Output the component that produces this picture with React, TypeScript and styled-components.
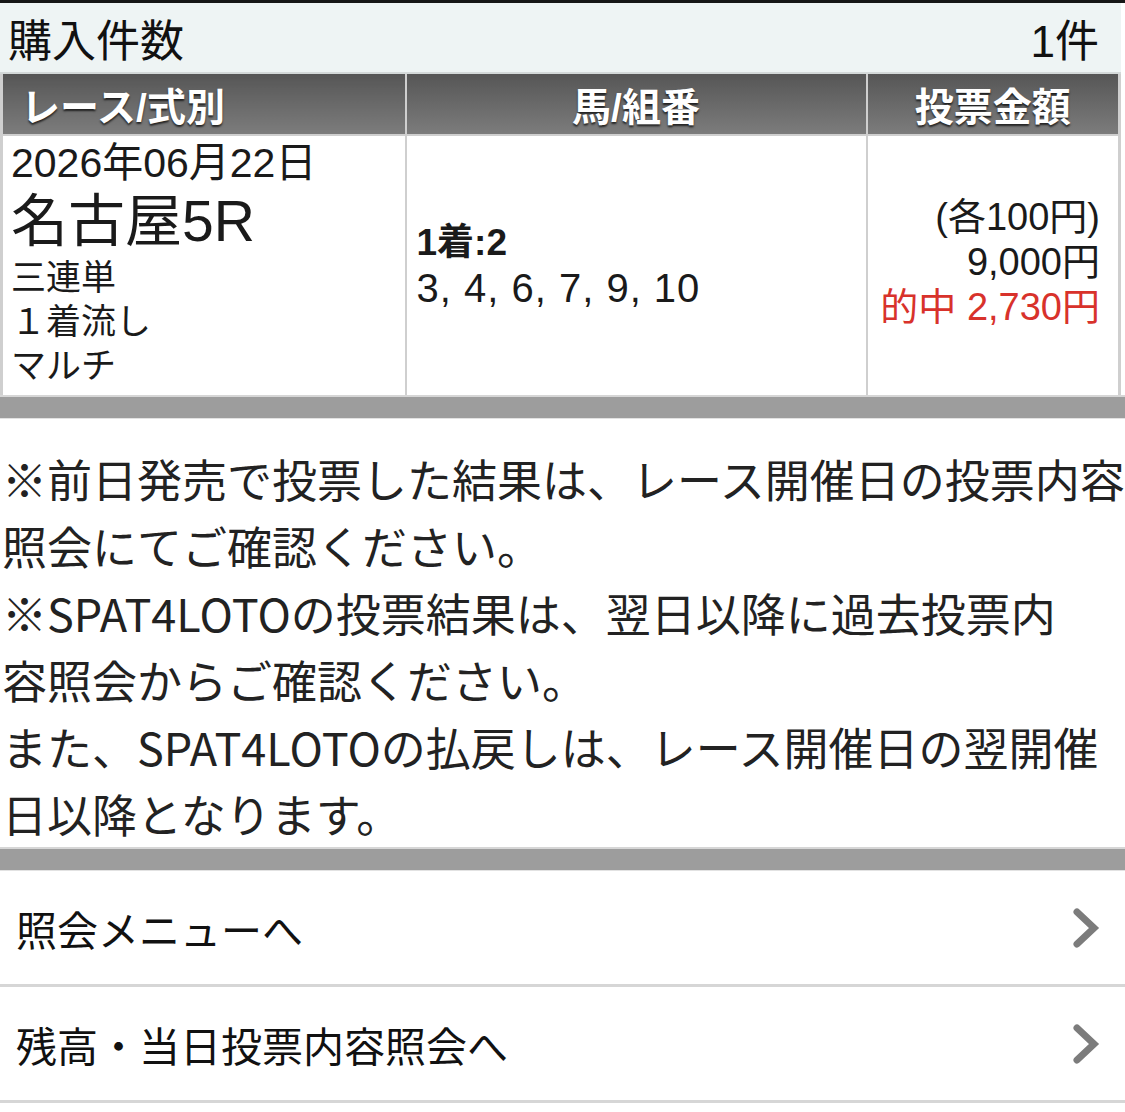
import styled, { createGlobalStyle } from "styled-components";

const GlobalStyle = createGlobalStyle`
  body {
    margin: 0;
    background: #ffffff;
    font-family: "Liberation Sans", "Noto Sans CJK JP", sans-serif;
    color: #1a1a1a;
  }
`;

const menuItems = ["照会メニューへ", "残高・当日投票内容照会へ"];

const notes = [
  "※前日発売で投票した結果は、レース開催日の投票内容",
  "照会にてご確認ください。",
  "※SPAT4LOTOの投票結果は、翌日以降に過去投票内",
  "容照会からご確認ください。",
  "また、SPAT4LOTOの払戻しは、レース開催日の翌開催",
  "日以降となります。",
];

const Chevron = () => (
  <svg width="30" height="42" viewBox="0 0 30 42">
    <polyline
      points="6,5 23,21 6,37"
      fill="none"
      stroke="#7c7c7c"
      strokeWidth="7"
      strokeLinecap="round"
      strokeLinejoin="miter"
    />
  </svg>
);

const App = () => {
  return (
    <Page>
      <GlobalStyle />
      <TopLine />
      <CountBar>
        <span>購入件数</span>
        <span>1件</span>
      </CountBar>
      <Table>
        <thead>
          <tr>
            <Th $align="left">レース/式別</Th>
            <Th $align="center">馬/組番</Th>
            <Th $align="center">投票金額</Th>
          </tr>
        </thead>
        <tbody>
          <tr>
            <RaceCell>
              <DateText>2026年06月22日</DateText>
              <RaceName>名古屋5R</RaceName>
              <BetType>三連単</BetType>
              <BetType>１着流し</BetType>
              <BetType>マルチ</BetType>
            </RaceCell>
            <HorseCell>
              <FirstPlace>1着:2</FirstPlace>
              <Numbers>3, 4, 6, 7, 9, 10</Numbers>
            </HorseCell>
            <AmountCell>
              <Amount>(各100円)</Amount>
              <Amount>9,000円</Amount>
              <Amount $hit>的中 2,730円</Amount>
            </AmountCell>
          </tr>
        </tbody>
      </Table>
      <Divider />
      <Notes>
        {notes.map((line, i) => (
          <NoteLine key={i}>{line}</NoteLine>
        ))}
      </Notes>
      <Divider />
      <Menu>
        {menuItems.map((label) => (
          <MenuItem key={label}>
            <span>{label}</span>
            <Chevron />
          </MenuItem>
        ))}
      </Menu>
    </Page>
  );
};

const Page = styled.div`
  width: 1125px;
  min-height: 1112px;
  background: #ffffff;
`;

const TopLine = styled.div`
  height: 3px;
  background: #161616;
`;

const CountBar = styled.div`
  display: flex;
  justify-content: space-between;
  align-items: center;
  width: 1121px;
  box-sizing: border-box;
  height: 71px;
  padding: 0 22px 0 8px;
  background: #eef4f4;
  border-bottom: 2px solid #d4d9d9;
  font-size: 44px;
  color: #111;
`;

const Table = styled.table`
  width: 1121px;
  border-collapse: collapse;
  table-layout: fixed;
  border-left: 3px solid #cfcfcf;
  border-right: 3px solid #cfcfcf;
  & td,
  & th {
    border-left: 2px solid #cfcfcf;
    border-right: 2px solid #cfcfcf;
  }
  & th:nth-child(1),
  & td:nth-child(1) {
    width: 404px;
  }
  & th:nth-child(2),
  & td:nth-child(2) {
    width: 461px;
  }
`;

const Th = styled.th<{ $align: "left" | "center" }>`
  height: 61px;
  padding: 0 0 0 ${(p) => (p.$align === "left" ? "18px" : "0")};
  box-sizing: border-box;
  text-align: ${(p) => p.$align};
  background: linear-gradient(#565656, #7c7c7c);
  color: #ffffff;
  font-size: 39px;
  font-weight: 700;
  text-shadow: 0 2px 2px rgba(0, 0, 0, 0.7);
  border-bottom: 2px solid #cfcfcf;
`;

const RaceCell = styled.td`
  height: 260px;
  vertical-align: top;
  padding: 4px 0 0 8px;
  box-sizing: border-box;
`;

const DateText = styled.div`
  font-size: 41px;
  line-height: 46px;
`;

const RaceName = styled.div`
  font-size: 57px;
  line-height: 70px;
`;

const BetType = styled.div`
  font-size: 35px;
  line-height: 44px;
`;

const HorseCell = styled.td`
  vertical-align: middle;
  padding: 0 0 0 10px;
`;

const FirstPlace = styled.div`
  font-size: 37px;
  font-weight: 700;
  line-height: 44px;
`;

const Numbers = styled.div`
  font-size: 40px;
  line-height: 46px;
  letter-spacing: 1px;
`;

const AmountCell = styled.td`
  vertical-align: middle;
  text-align: right;
  padding: 0 18px 6px 0;
`;

const Amount = styled.div<{ $hit?: boolean }>`
  font-size: 38px;
  line-height: 45px;
  color: ${(p) => (p.$hit ? "#d8322b" : "#1a1a1a")};
`;

const Divider = styled.div`
  height: 21px;
  background: #9d9d9d;
  border-top: 2px solid #d6d6d6;
  border-bottom: 1px solid #e2e2e2;
`;

const Notes = styled.div`
  padding: 26px 0 0 2px;
`;

const NoteLine = styled.div`
  font-family: "Noto Sans CJK JP", sans-serif;
  font-size: 45px;
  line-height: 67px;
  color: #222;
  white-space: nowrap;
`;

const Menu = styled.div`
  display: flex;
  flex-direction: column;
`;

const MenuItem = styled.div`
  display: flex;
  justify-content: space-between;
  align-items: center;
  height: 113px;
  padding: 0 24px 0 16px;
  border-bottom: 3px solid #d6d6d6;
  font-family: "Noto Sans CJK JP", sans-serif;
  font-size: 41px;
  color: #111;
  cursor: pointer;
`;

export default App;
